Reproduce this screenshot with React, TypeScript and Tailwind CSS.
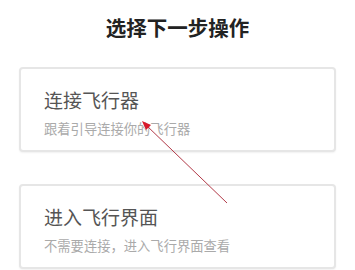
import React from "react"

const options = [
  { title: "连接飞行器", desc: "跟着引导连接你的飞行器" },
  { title: "进入飞行界面", desc: "不需要连接，进入飞行界面查看" },
]

export default function App() {
  return (
    <div
      className="relative w-[355px] h-[270px] overflow-hidden bg-white"
      style={{ fontFamily: '"Noto Sans CJK SC", "Noto Sans", sans-serif' }}
    >
      <h1 className="pt-[13px] text-center text-[20.5px] leading-[28px] font-bold text-[#222]">
        选择下一步操作
      </h1>

      <div className="mt-[26px] mx-[19px] flex flex-col gap-[32px]">
        {options.map((opt, i) => (
          <div
            key={i}
            className="h-[85px] rounded-[4px] border-2 border-[#e6e6e6] bg-white pl-[23px] pt-[19px] shadow-[0_1px_2px_rgba(0,0,0,0.06)]"
          >
            <div className="text-[19px] leading-[24px] text-[#555]">{opt.title}</div>
            <div className="mt-[8px] text-[13.3px] leading-[18px] text-[#aaa]">{opt.desc}</div>
          </div>
        ))}
      </div>

      {/* annotation arrow */}
      <svg className="absolute left-0 top-0 pointer-events-none" width="355" height="270">
        <line x1="227" y1="203" x2="146" y2="125" stroke="#b23a48" strokeWidth="1" />
        <polygon points="142,121 151,125 146,130" fill="#d8192a" />
      </svg>
    </div>
  )
}
